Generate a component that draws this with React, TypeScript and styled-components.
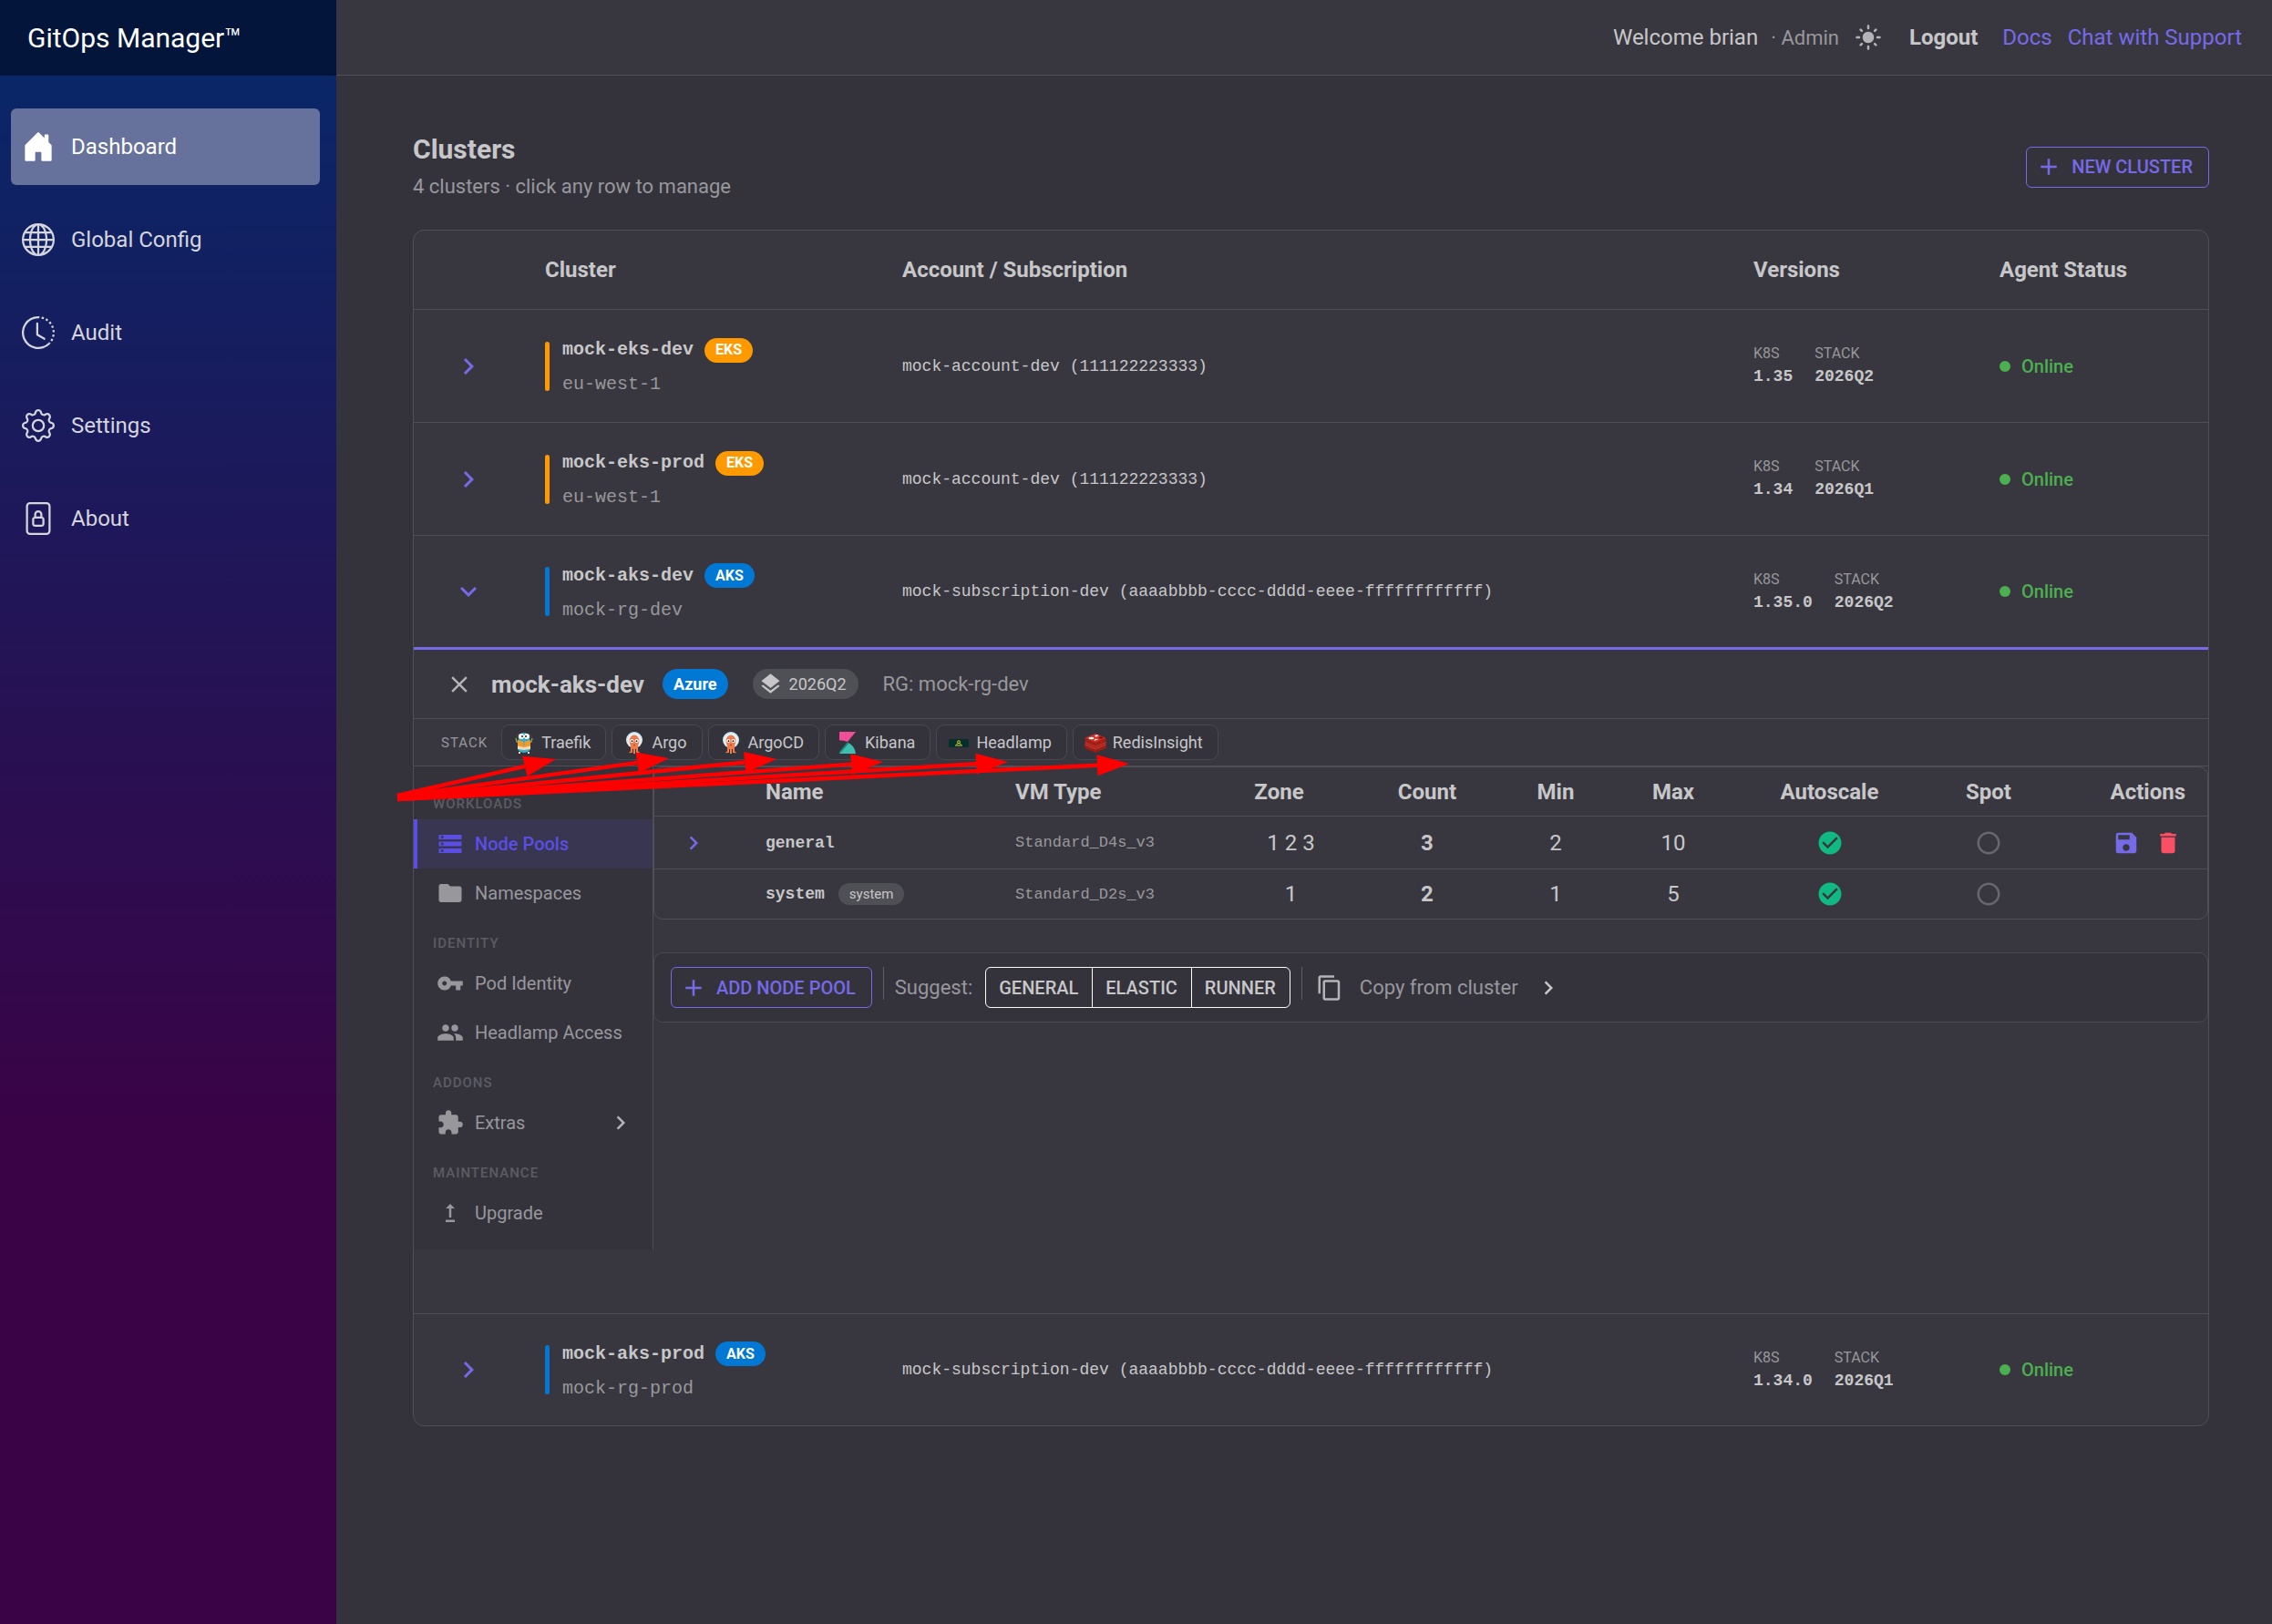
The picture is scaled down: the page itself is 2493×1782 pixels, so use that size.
import React from "react";
import styled, { createGlobalStyle } from "styled-components";
import {
  BsClockHistory,
  BsFileLock,
  BsGear,
  BsGlobe,
  BsHouseDoorFill
} from "react-icons/bs";
import {
  MdAdd,
  MdCheckCircle,
  MdChevronRight,
  MdClose,
  MdContentCopy,
  MdDelete,
  MdExpandMore,
  MdExtension,
  MdFolder,
  MdLayers,
  MdLightMode,
  MdPeople,
  MdRadioButtonUnchecked,
  MdSave,
  MdStorage,
  MdUpgrade,
  MdVpnKey
} from "react-icons/md";

const colors = {
  page: "#34333c",
  surface: "#38373f",
  line: "#4f4f55",
  text: "#c7c7c9",
  muted: "#98989c",
  faint: "#5c5c63",
  chip: "#4f5055",
  primary: "#766ae8",
  accent: "#5b4ee5",
  aws: "#ff9900",
  azure: "#0078d4",
  green: "#4caf50"
};

const mono = `"Liberation Mono", monospace`;

const GlobalStyle = createGlobalStyle`
  * {
    box-sizing: border-box;
  }
  body {
    margin: 0;
    background: ${colors.page};
    color: ${colors.text};
    font-family: Roboto, sans-serif;
    font-size: 24px;
  }
  button {
    font-family: inherit;
    color: inherit;
    background: none;
    border: none;
    padding: 0;
    cursor: pointer;
  }
  a {
    color: inherit;
    text-decoration: none;
  }
  svg {
    display: block;
    flex-shrink: 0;
  }
`;

const Layout = styled.div`
  display: flex;
  min-height: 100vh;
`;

const Sidebar = styled.aside`
  flex: 0 0 369px;
  background: linear-gradient(180deg, #06296a 0%, #3a0346 70%);
`;

const Brand = styled.div`
  height: 83px;
  display: flex;
  align-items: center;
  padding: 0 30px;
  background: #03153a;
  color: #fff;
  font-size: 30px;
`;

const Nav = styled.nav`
  display: flex;
  flex-direction: column;
  gap: 18px;
  padding: 36px 18px 0 12px;
`;

const NavLink = styled.a<{ $active?: boolean }>`
  height: 84px;
  display: flex;
  align-items: center;
  gap: 18px;
  padding: 0 12px;
  border-radius: 6px;
  color: ${props => (props.$active ? "#fff" : "#d5d5dc")};
  background: ${props => (props.$active ? "#67729c" : "transparent")};
`;

const Content = styled.div`
  flex: 1;
  min-width: 0;
`;

const TopBar = styled.header`
  height: 83px;
  display: flex;
  align-items: center;
  justify-content: flex-end;
  padding: 0 33px;
  background: ${colors.surface};
  border-bottom: 1px solid ${colors.line};
`;

const Role = styled.span`
  margin-left: 14px;
  font-size: 22px;
  color: ${colors.muted};
`;

const ThemeButton = styled.button`
  margin: 0 30px 0 17px;
  color: #b4b4b8;
`;

const LogoutButton = styled.button`
  margin-right: 27px;
  font-size: 24px;
  font-weight: 700;
`;

const TopLinks = styled.div`
  display: flex;
  gap: 17px;
  color: ${colors.primary};
`;

const Main = styled.main`
  padding: 63px 69px 63px 84px;
`;

const PageHeader = styled.div`
  display: flex;
  align-items: center;
  justify-content: space-between;
  margin-bottom: 32px;
`;

const Title = styled.h1`
  margin: 0 0 8px;
  font-size: 30px;
  line-height: 36px;
  font-weight: 700;
`;

const Subtitle = styled.p`
  margin: 0;
  font-size: 22px;
  line-height: 30px;
  color: ${colors.muted};
`;

const OutlineButton = styled.button`
  height: 45px;
  display: flex;
  align-items: center;
  gap: 10px;
  padding: 0 17px 0 9px;
  border: 1px solid ${colors.primary};
  border-radius: 6px;
  color: ${colors.primary};
  font-size: 20px;
  font-weight: 500;
`;

const Card = styled.div`
  border: 1px solid ${colors.line};
  border-radius: 12px;
  background: ${colors.surface};
`;

const Table = styled.table`
  width: 100%;
  table-layout: fixed;
  border-collapse: separate;
  border-spacing: 0;
`;

const HeadCell = styled.th`
  height: 87px;
  padding: 0 24px;
  text-align: left;
  font-weight: 700;
  border-bottom: 1px solid ${colors.line};
`;

const Cell = styled.td<{ $line?: boolean }>`
  height: ${props => (props.$line ? 124 : 122)}px;
  padding: 0 24px;
  border-bottom: ${props => (props.$line ? `1px solid ${colors.line}` : "none")};
`;

const ExpandButton = styled.button`
  display: block;
  margin: 0 auto;
  color: ${colors.primary};
`;

const ClusterInfo = styled.div`
  display: flex;
  align-items: center;
  gap: 14px;
`;

const ClusterBar = styled.div<{ $color: string }>`
  width: 5px;
  height: 54px;
  border-radius: 3px;
  background: ${props => props.$color};
`;

const ClusterText = styled.div`
  padding-top: 3px;
  font-family: ${mono};
  font-size: 20px;
  line-height: 36px;
`;

const ClusterName = styled.div`
  display: flex;
  align-items: center;
  gap: 12px;
  font-weight: 700;
`;

const ClusterPlace = styled.div`
  margin-top: 2px;
  color: ${colors.muted};
`;

const Badge = styled.span<{ $color: string; $large?: boolean }>`
  height: ${props => (props.$large ? 33 : 27)}px;
  display: flex;
  align-items: center;
  padding: 0 12px;
  border-radius: 17px;
  background: ${props => props.$color};
  color: #fff;
  font-family: Roboto, sans-serif;
  font-size: ${props => (props.$large ? 18 : 16)}px;
  font-weight: 700;
`;

const Account = styled.div`
  font-family: ${mono};
  font-size: 18px;
  line-height: 24px;
`;

const Versions = styled.div`
  display: flex;
  gap: 24px;
`;

const VersionLabel = styled.div`
  font-size: 16px;
  line-height: 24px;
  color: ${colors.muted};
`;

const VersionValue = styled.div`
  font-family: ${mono};
  font-size: 18px;
  line-height: 27px;
  font-weight: 700;
`;

const Status = styled.div`
  display: flex;
  align-items: center;
  gap: 12px;
  color: ${colors.green};
  font-size: 20px;
  font-weight: 500;
`;

const Dot = styled.span`
  width: 12px;
  height: 12px;
  border-radius: 50%;
  background: ${colors.green};
`;

const DetailCell = styled.td`
  padding: 0;
  border-top: 3px solid ${colors.primary};
  border-bottom: 1px solid ${colors.line};
`;

const DetailHeader = styled.div`
  height: 76px;
  display: flex;
  align-items: center;
  padding: 0 35px;
  gap: 27px;
  border-bottom: 1px solid ${colors.line};
`;

const DetailName = styled.div`
  display: flex;
  align-items: center;
  gap: 20px;
`;

const CloseButton = styled.button`
  color: #b4b4b8;
`;

const DetailTitle = styled.h2`
  margin: 0;
  font-size: 26px;
  font-weight: 700;
`;

const StackVersion = styled.span`
  height: 33px;
  display: flex;
  align-items: center;
  gap: 7px;
  padding: 0 13px 0 6px;
  border-radius: 17px;
  background: ${colors.chip};
  font-size: 18px;
`;

const ResourceGroup = styled.span`
  font-size: 22px;
  color: ${colors.muted};
`;

const StackBar = styled.div`
  position: relative;
  height: 52px;
  display: flex;
  align-items: center;
  gap: 6px;
  padding: 0 30px;
  border-bottom: 1px solid ${colors.line};
`;

const StackLabel = styled.span`
  margin-right: 9px;
  font-size: 15px;
  letter-spacing: 1px;
  color: ${colors.muted};
`;

const StackLink = styled.a`
  height: 39px;
  display: flex;
  align-items: center;
  gap: 7px;
  padding: 0 16px 0 12px;
  border: 1px solid #484850;
  border-radius: 9px;
  background: ${colors.page};
  font-size: 18px;
`;

const ArrowLayer = styled.svg`
  position: absolute;
  top: 0;
  left: 0;
  overflow: visible;
  pointer-events: none;
  z-index: 1;
`;

const DetailBody = styled.div`
  display: flex;
  align-items: flex-start;
  padding-bottom: 70px;
`;

const DetailNav = styled.nav`
  flex: 0 0 263px;
  padding: 13px 0;
  border-right: 1px solid ${colors.line};
  background: ${colors.page};
`;

const GroupLabel = styled.div`
  padding: 17px 21px 6px;
  font-size: 15px;
  line-height: 22px;
  font-weight: 500;
  letter-spacing: 1px;
  color: ${colors.faint};
`;

const DetailNavItem = styled.button<{ $active?: boolean }>`
  width: 100%;
  height: 54px;
  display: flex;
  align-items: center;
  gap: 12px;
  padding: 0 20px 0 21px;
  border-left: 4px solid ${props => (props.$active ? colors.accent : "transparent")};
  background: ${props => (props.$active ? "#383650" : "transparent")};
  color: ${props => (props.$active ? colors.accent : colors.muted)};
  font-size: 20px;
  font-weight: ${props => (props.$active ? 500 : 400)};
`;

const ItemText = styled.span`
  flex: 1;
  text-align: left;
`;

const DetailContent = styled.div`
  flex: 1;
  min-width: 0;
`;

const NodeCard = styled.div`
  margin-bottom: 36px;
  border: 1px solid ${colors.line};
  border-radius: 10px;
`;

const NodeHead = styled.th<{ $align?: string }>`
  height: 54px;
  padding: 0 24px;
  text-align: ${props => props.$align || "center"};
  font-weight: 700;
  border-bottom: 1px solid ${colors.line};
`;

const ZoneHead = styled(NodeHead)`
  padding: 0 50px 0 24px;
`;

const NodeCell = styled.td<{ $line?: boolean }>`
  height: ${props => (props.$line ? 58 : 54)}px;
  padding: 0 24px;
  text-align: center;
  border-bottom: ${props => (props.$line ? `1px solid ${colors.line}` : "none")};
  > svg {
    margin: 0 auto;
  }
`;

const ExpandCell = styled(NodeCell)`
  padding: 0 24px 0 12px;
`;

const NodeName = styled.div`
  display: flex;
  align-items: center;
  gap: 15px;
  font-family: ${mono};
  font-size: 18px;
  font-weight: 700;
`;

const SystemChip = styled.span`
  height: 24px;
  display: flex;
  align-items: center;
  padding: 0 12px;
  border-radius: 12px;
  background: ${colors.chip};
  font-family: Roboto, sans-serif;
  font-size: 15px;
  font-weight: 400;
`;

const VmType = styled.div`
  text-align: left;
  font-family: ${mono};
  font-size: 17px;
  color: ${colors.muted};
`;

const Count = styled.span`
  font-weight: 700;
`;

const Actions = styled.div`
  display: flex;
  justify-content: flex-end;
  gap: 16px;
  padding-right: 4px;
`;

const ActionButton = styled.button<{ $color: string }>`
  color: ${props => props.$color};
`;

const Toolbar = styled.div`
  display: flex;
  align-items: center;
  gap: 12px;
  padding: 15px 18px;
  border: 1px solid #4a4a52;
  border-radius: 10px;
  background: ${colors.page};
  font-size: 22px;
  color: ${colors.muted};
`;

const Divider = styled.div`
  align-self: flex-start;
  width: 1px;
  height: 36px;
  background: ${colors.faint};
`;

const ButtonGroup = styled.div`
  height: 45px;
  display: flex;
  margin-left: 2px;
  border: 1px solid #fff;
  border-radius: 6px;
`;

const GroupButton = styled.button`
  padding: 0 15px 0 14px;
  color: ${colors.text};
  font-size: 20px;
  font-weight: 500;
  & + & {
    border-left: 1px solid #fff;
  }
`;

const CopyButton = styled.button`
  display: flex;
  align-items: center;
  gap: 18px;
  margin-left: 3px;
  font-size: 22px;
`;

const TraefikLogo = () => (
  <svg width="24" height="24" viewBox="0 0 24 24">
    <circle cx="6" cy="4.500" r="2.600" fill="#4b3c3c" />
    <circle cx="18" cy="4.500" r="2.600" fill="#4b3c3c" />
    <path d="M3 7l1 4 3 1M21 7l-1 4-3 1" fill="none" stroke="#9fa14f" strokeWidth="1.300" />
    <path d="M6 6a6 5 0 0 1 12 0l1 12a7 5 0 0 1-14 0z" fill="#37abc8" />
    <circle cx="9" cy="5" r="3" fill="#fff" />
    <circle cx="15" cy="5" r="3" fill="#fff" />
    <circle cx="10" cy="5" r="1" fill="#222" />
    <circle cx="14" cy="5" r="1" fill="#222" />
    <path d="M5 9l7 2 7-2v7l-7 1-7-1z" fill="#f39a2d" />
    <path d="M5 15.500l7 1.500 7-1.500v3.500l-7 1-7-1z" fill="#f2dcb8" />
    <path d="M12 8v7" stroke="#37abc8" strokeWidth="1" />
    <path d="M7 22v2M17 22v2" stroke="#f2dcb8" strokeWidth="2" />
  </svg>
);

const ArgoLogo = () => (
  <svg width="24" height="24" viewBox="0 0 24 24">
    <circle cx="12" cy="9" r="9" fill="#cfe9f3" />
    <circle cx="12" cy="9.500" r="7.300" fill="#e9f6fa" />
    <path d="M6.500 10a5.500 6.500 0 0 1 11 0c0 3-1.500 4-1.500 7v6h-2v-4h-1v5h-2v-5h-1v4h-2v-6c0-3-1.500-4-1.500-7z" fill="#ef7b4d" />
    <path d="M8 22.500H6.500M16 22.500h1.500" stroke="#ef7b4d" strokeWidth="1.500" />
    <circle cx="9.300" cy="10" r="2.100" fill="#fff" />
    <circle cx="14.700" cy="10" r="2.100" fill="#fff" />
    <circle cx="9.500" cy="10.200" r="0.900" fill="#111" />
    <circle cx="14.500" cy="10.200" r="0.900" fill="#111" />
    <path d="M11 14q1 1.500 2 0z" fill="#111" />
  </svg>
);

const KibanaLogo = () => (
  <svg width="24" height="24" viewBox="0 0 24 24">
    <path d="M3 0h18l-9 11q-4-1.800-9-1.800z" fill="#f04e98" />
    <path d="M12 11.500q8 4 9 12.500H3v-1.500z" fill="#3ebeb0" />
    <path d="M12 11.500l1.500 1L3.500 24H3v-1.800z" fill="#14857b" />
  </svg>
);

const HeadlampLogo = () => (
  <svg width="24" height="24" viewBox="0 0 24 24">
    <rect x="1" y="8" width="22" height="9" fill="#052e2c" />
    <path d="M8 15h8M9.500 14l1.500-1.500h2l1.500 1.500" fill="none" stroke="#e8d81f" strokeWidth="1" />
    <circle cx="12" cy="11.300" r="1.500" fill="none" stroke="#e8d81f" strokeWidth="1" />
  </svg>
);

const RedisLogo = () => (
  <svg width="24" height="24" viewBox="0 0 24 24">
    <path d="M0.500 15l11.500 5 11.500-5v3L12 23 0.500 18z" fill="#a41e11" />
    <path d="M0.500 10.500l11.500 5 11.500-5v4.300l-11.500 5-11.500-5z" fill="#c6302b" />
    <path d="M0.500 7l11.500 5 11.500-5v3.500l-11.500 5-11.500-5z" fill="#a41e11" />
    <path d="M0.500 6.800L12 2l11.500 4.800L12 12z" fill="#d82c20" />
    <path d="M0.500 12.500l11.500 5 11.500-5M0.500 17l11.500 5 11.500-5" fill="none" stroke="#8e1710" strokeWidth="0.700" />
    <ellipse cx="7.500" cy="7" rx="3" ry="1.200" fill="#fff" />
    <path d="M11 4l4-1 -1 1.600 2 .4-4 .6zM10.500 10l1-2.300 4 .3z" fill="#fff" />
    <path d="M15 6.500l3-1.200 3 1.200-3 1.300z" fill="#7a0c00" />
  </svg>
);

const navItems = [
  { label: "Dashboard", icon: BsHouseDoorFill, active: true },
  { label: "Global Config", icon: BsGlobe },
  { label: "Audit", icon: BsClockHistory },
  { label: "Settings", icon: BsGear },
  { label: "About", icon: BsFileLock }
];

const stackApps = [
  { name: "Traefik", logo: TraefikLogo },
  { name: "Argo", logo: ArgoLogo },
  { name: "ArgoCD", logo: ArgoLogo },
  { name: "Kibana", logo: KibanaLogo },
  { name: "Headlamp", logo: HeadlampLogo },
  { name: "RedisInsight", logo: RedisLogo }
];

const detailGroups = [
  {
    label: "WORKLOADS",
    items: [
      { name: "Node Pools", icon: MdStorage, active: true },
      { name: "Namespaces", icon: MdFolder }
    ]
  },
  {
    label: "IDENTITY",
    items: [
      { name: "Pod Identity", icon: MdVpnKey },
      { name: "Headlamp Access", icon: MdPeople }
    ]
  },
  { label: "ADDONS", items: [{ name: "Extras", icon: MdExtension, more: true }] },
  { label: "MAINTENANCE", items: [{ name: "Upgrade", icon: MdUpgrade }] }
];

interface Cluster {
  name: string;
  kind: string;
  place: string;
  account: string;
  k8s: string;
  stack: string;
  open?: boolean;
}

const subscription = "mock-subscription-dev (aaaabbbb-cccc-dddd-eeee-ffffffffffff)";

const clusters: Cluster[] = [
  { name: "mock-eks-dev", kind: "EKS", place: "eu-west-1", account: "mock-account-dev (111122223333)", k8s: "1.35", stack: "2026Q2" },
  { name: "mock-eks-prod", kind: "EKS", place: "eu-west-1", account: "mock-account-dev (111122223333)", k8s: "1.34", stack: "2026Q1" },
  { name: "mock-aks-dev", kind: "AKS", place: "mock-rg-dev", account: subscription, k8s: "1.35.0", stack: "2026Q2", open: true },
  { name: "mock-aks-prod", kind: "AKS", place: "mock-rg-prod", account: subscription, k8s: "1.34.0", stack: "2026Q1" }
];

const nodePools = [
  { name: "general", vm: "Standard_D4s_v3", zone: "1 2 3", count: 3, min: 2, max: 10, system: false },
  { name: "system", vm: "Standard_D2s_v3", zone: "1", count: 2, min: 1, max: 5, system: true }
];

// [start y, tip x, tip y], all arrows leave from the same x
const arrows = [
  [84, 156, 44],
  [85, 280, 43],
  [86, 398, 44],
  [87, 515, 47],
  [88, 652, 47],
  [88, 785, 49]
];

const Arrows = () => {
  const startX = -18;
  return (
    <ArrowLayer width="1" height="1" aria-hidden="true">
      {arrows.map(([startY, x, y]) => {
        const length = Math.hypot(x - startX, y - startY);
        const dx = (x - startX) / length;
        const dy = (y - startY) / length;
        const bx = x - dx * 35;
        const by = y - dy * 35;
        return (
          <g key={x} fill="red" stroke="red">
            <line x1={startX} y1={startY} x2={bx} y2={by} strokeWidth="4.500" />
            <polygon
              stroke="none"
              points={`${x},${y} ${bx - dy * 11.5},${by + dx * 11.5} ${bx + dy * 11.5},${by - dx * 11.5}`}
            />
          </g>
        );
      })}
    </ArrowLayer>
  );
};

const NodePools = () => (
  <NodeCard>
    <Table>
      <colgroup>
        {[98, 274, 261, 131, 168, 114, 144, 199, 150, 165].map((width, i) => (
          <col key={i} width={width} />
        ))}
      </colgroup>
      <thead>
        <tr>
          <NodeHead aria-label="Expand" />
          <NodeHead $align="left">Name</NodeHead>
          <NodeHead $align="left">VM Type</NodeHead>
          <ZoneHead>Zone</ZoneHead>
          <NodeHead>Count</NodeHead>
          <NodeHead>Min</NodeHead>
          <NodeHead>Max</NodeHead>
          <NodeHead>Autoscale</NodeHead>
          <NodeHead>Spot</NodeHead>
          <NodeHead $align="right">Actions</NodeHead>
        </tr>
      </thead>
      <tbody>
        {nodePools.map(pool => {
          const line = !pool.system;
          return (
            <tr key={pool.name}>
              <ExpandCell $line={line}>
                {!pool.system && (
                  <ExpandButton aria-label="Expand general">
                    <MdChevronRight size={30} />
                  </ExpandButton>
                )}
              </ExpandCell>
              <NodeCell $line={line}>
                <NodeName>
                  {pool.name}
                  {pool.system && <SystemChip>system</SystemChip>}
                </NodeName>
              </NodeCell>
              <NodeCell $line={line}>
                <VmType>{pool.vm}</VmType>
              </NodeCell>
              <NodeCell $line={line}>{pool.zone}</NodeCell>
              <NodeCell $line={line}>
                <Count>{pool.count}</Count>
              </NodeCell>
              <NodeCell $line={line}>{pool.min}</NodeCell>
              <NodeCell $line={line}>{pool.max}</NodeCell>
              <NodeCell $line={line}>
                <MdCheckCircle size={30} color="#10b981" />
              </NodeCell>
              <NodeCell $line={line}>
                <MdRadioButtonUnchecked size={30} color="#67676c" />
              </NodeCell>
              <NodeCell $line={line}>
                {!pool.system && (
                  <Actions>
                    <ActionButton $color={colors.primary} aria-label="Save">
                      <MdSave size={30} />
                    </ActionButton>
                    <ActionButton $color="#fb4f64" aria-label="Delete">
                      <MdDelete size={30} />
                    </ActionButton>
                  </Actions>
                )}
              </NodeCell>
            </tr>
          );
        })}
      </tbody>
    </Table>
  </NodeCard>
);

const ClusterDetail = () => (
  <>
    <DetailHeader>
      <DetailName>
        <CloseButton aria-label="Close">
          <MdClose size={30} />
        </CloseButton>
        <DetailTitle>mock-aks-dev</DetailTitle>
        <Badge $color={colors.azure} $large>Azure</Badge>
      </DetailName>
      <StackVersion>
        <MdLayers size={27} />
        2026Q2
      </StackVersion>
      <ResourceGroup>RG: mock-rg-dev</ResourceGroup>
    </DetailHeader>
    <StackBar>
      <StackLabel>STACK</StackLabel>
      {stackApps.map(({ name, logo: Logo }) => (
        <StackLink key={name} href="#">
          <Logo />
          {name}
        </StackLink>
      ))}
      <Arrows />
    </StackBar>
    <DetailBody>
      <DetailNav>
        {detailGroups.map(group => (
          <React.Fragment key={group.label}>
            <GroupLabel>{group.label}</GroupLabel>
            {group.items.map(({ name, icon: Icon, active, more }: any) => (
              <DetailNavItem key={name} $active={active}>
                <Icon size={30} />
                <ItemText>{name}</ItemText>
                {more && <MdChevronRight size={30} color="#b4b4b8" />}
              </DetailNavItem>
            ))}
          </React.Fragment>
        ))}
      </DetailNav>
      <DetailContent>
        <NodePools />
        <Toolbar>
          <OutlineButton>
            <MdAdd size={30} />
            ADD NODE POOL
          </OutlineButton>
          <Divider />
          Suggest:
          <ButtonGroup>
            <GroupButton>GENERAL</GroupButton>
            <GroupButton>ELASTIC</GroupButton>
            <GroupButton>RUNNER</GroupButton>
          </ButtonGroup>
          <Divider />
          <CopyButton>
            <MdContentCopy size={30} color="#b4b4b8" />
            Copy from cluster
            <MdChevronRight size={30} color={colors.text} />
          </CopyButton>
        </Toolbar>
      </DetailContent>
    </DetailBody>
  </>
);

const ClusterRow = ({ cluster, line }: { cluster: Cluster; line: boolean }) => {
  const color = cluster.kind === "EKS" ? colors.aws : colors.azure;
  return (
    <tr>
      <Cell $line={line}>
        <ExpandButton aria-label={`Manage ${cluster.name}`}>
          {cluster.open ? <MdExpandMore size={36} /> : <MdChevronRight size={36} />}
        </ExpandButton>
      </Cell>
      <Cell $line={line}>
        <ClusterInfo>
          <ClusterBar $color={color} />
          <ClusterText>
            <ClusterName>
              {cluster.name}
              <Badge $color={color}>{cluster.kind}</Badge>
            </ClusterName>
            <ClusterPlace>{cluster.place}</ClusterPlace>
          </ClusterText>
        </ClusterInfo>
      </Cell>
      <Cell $line={line}>
        <Account>{cluster.account}</Account>
      </Cell>
      <Cell $line={line}>
        <Versions>
          <div>
            <VersionLabel>K8S</VersionLabel>
            <VersionValue>{cluster.k8s}</VersionValue>
          </div>
          <div>
            <VersionLabel>STACK</VersionLabel>
            <VersionValue>{cluster.stack}</VersionValue>
          </div>
        </Versions>
      </Cell>
      <Cell $line={line}>
        <Status>
          <Dot />
          Online
        </Status>
      </Cell>
    </tr>
  );
};

const App: React.FC = () => (
  <Layout>
    <GlobalStyle />
    <Sidebar>
      <Brand>GitOps Manager™</Brand>
      <Nav>
        {navItems.map(({ label, icon: Icon, active }) => (
          <NavLink key={label} href="#" $active={active}>
            <Icon size={36} />
            {label}
          </NavLink>
        ))}
      </Nav>
    </Sidebar>
    <Content>
      <TopBar>
        <span>Welcome brian</span>
        <Role>· Admin</Role>
        <ThemeButton aria-label="Toggle theme">
          <MdLightMode size={30} />
        </ThemeButton>
        <LogoutButton>Logout</LogoutButton>
        <TopLinks>
          <a href="#">Docs</a>
          <a href="#">Chat with Support</a>
        </TopLinks>
      </TopBar>
      <Main>
        <PageHeader>
          <div>
            <Title>Clusters</Title>
            <Subtitle>4 clusters · click any row to manage</Subtitle>
          </div>
          <OutlineButton>
            <MdAdd size={30} />
            NEW CLUSTER
          </OutlineButton>
        </PageHeader>
        <Card>
          <Table>
            <colgroup>
              {[120, 392, 934, 270, 253].map((width, i) => (
                <col key={i} width={width} />
              ))}
            </colgroup>
            <thead>
              <tr>
                <HeadCell aria-label="Expand" />
                <HeadCell>Cluster</HeadCell>
                <HeadCell>Account / Subscription</HeadCell>
                <HeadCell>Versions</HeadCell>
                <HeadCell>Agent Status</HeadCell>
              </tr>
            </thead>
            <tbody>
              {clusters.map((cluster, i) => (
                <React.Fragment key={cluster.name}>
                  <ClusterRow
                    cluster={cluster}
                    line={!cluster.open && i < clusters.length - 1}
                  />
                  {cluster.open && (
                    <tr>
                      <DetailCell colSpan={5}>
                        <ClusterDetail />
                      </DetailCell>
                    </tr>
                  )}
                </React.Fragment>
              ))}
            </tbody>
          </Table>
        </Card>
      </Main>
    </Content>
  </Layout>
);

export default App;
